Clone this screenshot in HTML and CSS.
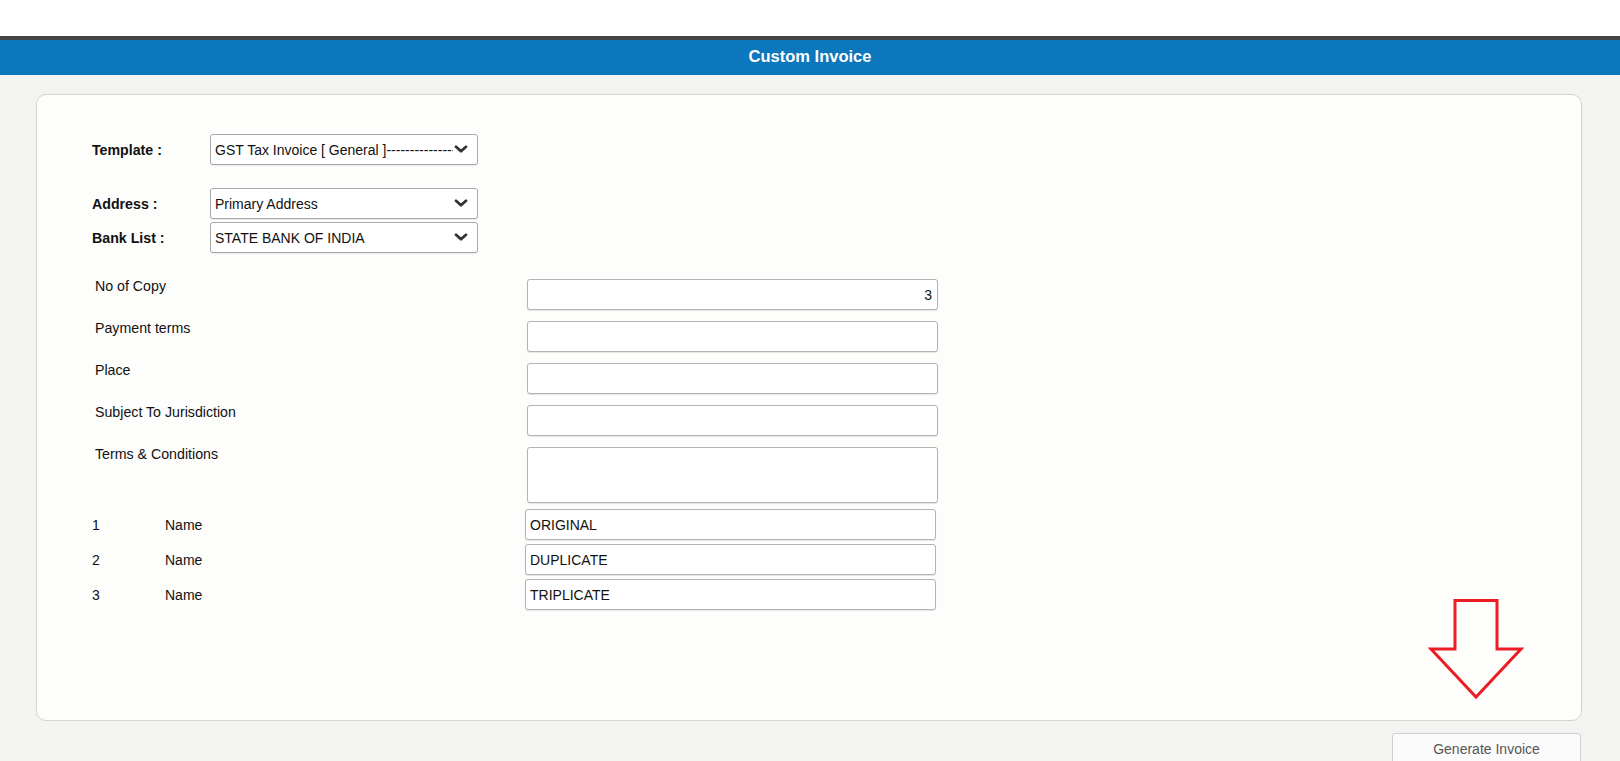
FILE: index.html
```html
<!DOCTYPE html>
<html lang="en">
<head>
<meta charset="utf-8">
<title>Custom Invoice</title>
<link rel="stylesheet" href="styles.css">
</head>
<body>
<div class="top-strip"></div>
<header class="title-bar">Custom Invoice</header>
<main class="page">
  <section class="card">
    <div class="select-row select-row--first">
      <label class="select-label" for="template">Template :</label>
      <div class="select-wrap">
        <select id="template" class="select">
          <option>GST Tax Invoice [ General ]--------------------------</option>
        </select>
        <svg class="chevron" viewBox="0 0 14 8" width="14" height="8"><path d="M2 1.8 L7 6.2 L12 1.8" fill="none" stroke="#333" stroke-width="2.8" stroke-linecap="round" stroke-linejoin="round"/></svg>
      </div>
    </div>
    <div class="select-row select-row--address">
      <label class="select-label" for="address">Address :</label>
      <div class="select-wrap">
        <select id="address" class="select">
          <option>Primary Address</option>
        </select>
        <svg class="chevron" viewBox="0 0 14 8" width="14" height="8"><path d="M2 1.8 L7 6.2 L12 1.8" fill="none" stroke="#333" stroke-width="2.8" stroke-linecap="round" stroke-linejoin="round"/></svg>
      </div>
    </div>
    <div class="select-row select-row--bank">
      <label class="select-label" for="bank">Bank List :</label>
      <div class="select-wrap">
        <select id="bank" class="select">
          <option>STATE BANK OF INDIA</option>
        </select>
        <svg class="chevron" viewBox="0 0 14 8" width="14" height="8"><path d="M2 1.8 L7 6.2 L12 1.8" fill="none" stroke="#333" stroke-width="2.8" stroke-linecap="round" stroke-linejoin="round"/></svg>
      </div>
    </div>

    <div class="fields">
      <div class="field-row">
        <span class="field-label">No of Copy</span>
        <input class="field-input field-input--number" type="text" value="3">
      </div>
      <div class="field-row">
        <span class="field-label">Payment terms</span>
        <input class="field-input" type="text" value="">
      </div>
      <div class="field-row">
        <span class="field-label">Place</span>
        <input class="field-input" type="text" value="">
      </div>
      <div class="field-row">
        <span class="field-label">Subject To Jurisdiction</span>
        <input class="field-input" type="text" value="">
      </div>
      <div class="field-row">
        <span class="field-label">Terms &amp; Conditions</span>
        <textarea class="field-input field-textarea"></textarea>
      </div>
    </div>

    <div class="copies">
      <div class="copy-row">
        <span class="copy-num">1</span>
        <span class="copy-label">Name</span>
        <input class="copy-input" type="text" value="ORIGINAL">
      </div>
      <div class="copy-row">
        <span class="copy-num">2</span>
        <span class="copy-label">Name</span>
        <input class="copy-input" type="text" value="DUPLICATE">
      </div>
      <div class="copy-row">
        <span class="copy-num">3</span>
        <span class="copy-label">Name</span>
        <input class="copy-input" type="text" value="TRIPLICATE">
      </div>
    </div>

    <!-- pointer toward the generate button -->
    <svg class="pointer-arrow" viewBox="0 0 96 104" width="96" height="104">
      <polygon points="27,3.5 69,3.5 69,52 93,52 48,100 3,52 27,52" fill="none" stroke="#ec1c24" stroke-width="3" stroke-linejoin="miter"/>
    </svg>
  </section>
  <div class="actions">
    <button class="btn" type="button">Generate Invoice</button>
  </div>
</main>
</body>
</html>
```

FILE: styles.css
```css
html, body {
  margin: 0;
  padding: 0;
}

body {
  background: #f3f3f2;
  font-family: "Liberation Sans", Arial, sans-serif;
  font-size: 14px;
  color: #111;
  overflow: hidden;
}

.top-strip {
  height: 36px;
  background: #ffffff;
}

.title-bar {
  border-top: 4px solid #454545;
  height: 35px;
  background: #0b77bd;
  color: #ffffff;
  font-weight: bold;
  font-size: 16.5px;
  line-height: 33px;
  text-align: center;
}

.page {
  padding: 19px 38px 0 36px;
}

.card {
  position: relative;
  background: #fdfdfc;
  border: 1px solid #d3d3d1;
  border-radius: 10px;
  padding: 39px 0 110px 55px;
}

/* select rows */
.select-row {
  display: flex;
  align-items: center;
  height: 31px;
}

.select-row--address {
  margin-top: 23px;
}

.select-row--bank {
  margin-top: 3px;
}

.select-label {
  width: 118px;
  font-weight: bold;
  font-size: 14.2px;
  color: #111;
}

.select-wrap {
  position: relative;
  width: 268px;
  height: 31px;
}

.select {
  appearance: none;
  -webkit-appearance: none;
  box-sizing: border-box;
  width: 100%;
  height: 31px;
  margin: 0;
  padding: 0 24px 0 4px;
  border: 1px solid #a9a9a9;
  border-radius: 3px;
  background: #ffffff;
  font-family: "Liberation Sans", Arial, sans-serif;
  font-size: 14px;
  color: #111;
  box-shadow: 0 1px 1px rgba(0, 0, 0, 0.08);
}

.chevron {
  position: absolute;
  right: 10px;
  top: 11px;
  pointer-events: none;
}

/* text fields */
.fields {
  margin-top: 26px;
  display: flex;
  flex-direction: column;
  gap: 11px;
}

.field-row {
  display: flex;
  align-items: flex-start;
}

.field-label {
  box-sizing: border-box;
  width: 435px;
  padding-left: 3px;
  font-size: 14.2px;
  line-height: 14px;
}

.field-input {
  box-sizing: border-box;
  width: 411px;
  height: 31px;
  margin: 0;
  padding: 0 7px;
  border: 1px solid #b3b3b3;
  border-radius: 3px;
  background: #ffffff;
  font-family: "Liberation Sans", Arial, sans-serif;
  font-size: 14px;
  color: #111;
  box-shadow: 0 1px 1px rgba(0, 0, 0, 0.1);
}

.field-input--number {
  text-align: right;
  padding-right: 5px;
}

.field-textarea {
  height: 56px;
  resize: none;
  padding: 4px 7px;
}

/* copy name rows */
.copies {
  margin-top: 6px;
  display: flex;
  flex-direction: column;
  gap: 4px;
}

.copy-row {
  display: flex;
  align-items: center;
  height: 31px;
}

.copy-num {
  width: 73px;
}

.copy-label {
  width: 360px;
}

.copy-input {
  box-sizing: border-box;
  width: 411px;
  height: 31px;
  margin: 0;
  padding: 0 4px;
  border: 1px solid #b3b3b3;
  border-radius: 3px;
  background: #ffffff;
  font-family: "Liberation Sans", Arial, sans-serif;
  font-size: 14px;
  color: #111;
  box-shadow: 0 1px 1px rgba(0, 0, 0, 0.1);
}

.pointer-arrow {
  position: absolute;
  left: 1391px;
  top: 502px;
}

/* footer action */
.actions {
  display: flex;
  justify-content: flex-end;
  margin-top: 12px;
  padding-right: 1px;
}

.btn {
  box-sizing: border-box;
  width: 189px;
  height: 32px;
  border: 1px solid #cfcfcf;
  border-radius: 3px;
  background: #fbfbfb;
  color: #555;
  font-family: "Liberation Sans", Arial, sans-serif;
  font-size: 14px;
}
```
